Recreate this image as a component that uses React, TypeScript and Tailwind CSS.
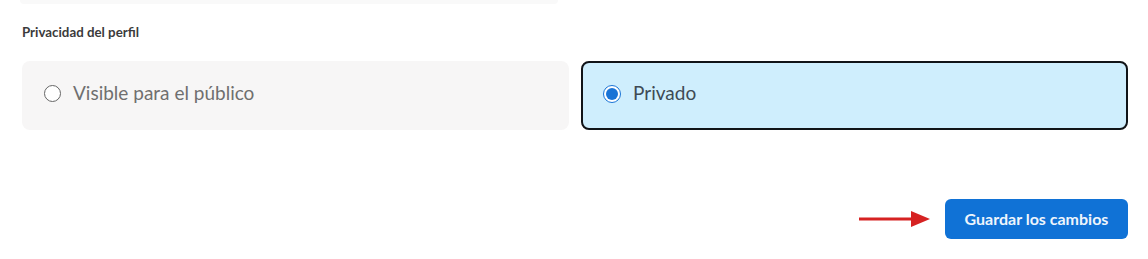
import React from "react";

export default function App() {
  const font = { fontFamily: '"Lato", "Liberation Sans", sans-serif' };
  return (
    <div className="w-[1148px] h-[259px] bg-white overflow-hidden" style={font}>
      <div className="ml-[20px] w-[538px] h-[4px] bg-[#f9f9f9] rounded-b" />
      <div className="pl-[22px] pr-[20px]">
        <div className="mt-[18px] h-[20px] text-[13.3px] leading-[20px] font-bold text-[#3b3b3b]">
          Privacidad del perfil
        </div>
        <div className="mt-[19px] grid grid-cols-2 gap-[12px]">
          <label className="h-[69px] rounded-[8px] bg-[#f7f6f6] flex items-center pl-[22px] gap-[12px] pb-[4px]">
            <span className="w-[17px] h-[17px] rounded-full border border-[#666] bg-white" />
            <span className="text-[19px] text-[#6f6f6f]">Visible para el público</span>
          </label>
          <label className="h-[69px] rounded-[8px] bg-[#cfeefd] border-2 border-[#111418] flex items-center pl-[20px] gap-[12px] pb-[4px]">
            <span className="w-[18px] h-[18px] rounded-full border border-[#1a74d6] bg-white flex items-center justify-center">
              <span className="w-[12px] h-[12px] rounded-full bg-[#1a74d6]" />
            </span>
            <span className="text-[19px] text-[#3e4a55]">Privado</span>
          </label>
        </div>
        <div className="mt-[69px] flex items-center justify-end gap-[14px]">
          <svg width="72" height="20" viewBox="0 0 72 20">
            <line x1="0" y1="10" x2="56" y2="10" stroke="#d62222" strokeWidth="3" />
            <polygon points="52,2 71,10 52,18" fill="#d62222" />
          </svg>
          <button className="h-[40px] w-[183px] rounded-[6px] bg-[#1072d6] text-[#eef5fc] text-[16px] font-bold">
            Guardar los cambios
          </button>
        </div>
      </div>
    </div>
  );
}
